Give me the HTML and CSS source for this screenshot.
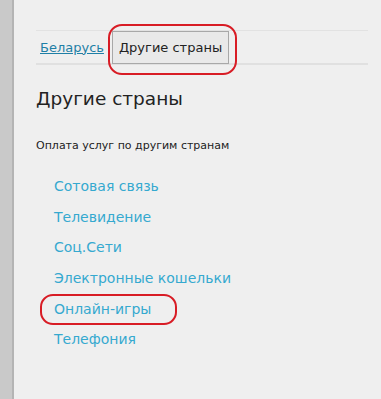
FILE: index.html
```html
<!DOCTYPE html>
<html lang="ru">
<head>
    <meta charset="UTF-8">
    <title>Другие страны</title>
    <link rel="stylesheet" href="styles.css">
</head>
<body>
    <div class="side-strip"></div>
    <div class="page">
        <div class="tabs">
            <a class="tab-link" href="#">Беларусь</a>
            <span class="tab-active">Другие страны</span>
        </div>
        <h1 class="title">Другие страны</h1>
        <p class="lead">Оплата услуг по другим странам</p>
        <ul class="services">
            <li><a href="#">Сотовая связь</a></li>
            <li><a href="#">Телевидение</a></li>
            <li><a href="#">Соц.Сети</a></li>
            <li><a href="#">Электронные кошельки</a></li>
            <li><a class="marked" href="#">Онлайн-игры</a></li>
            <li><a href="#">Телефония</a></li>
        </ul>
    </div>
</body>
</html>
```

FILE: styles.css
```css
body {
    display: flex;
    margin: 0;
    height: 399px;
    font-family: "DejaVu Sans", Verdana, sans-serif;
    background-color: #efefef;
    color: #222;
    overflow: hidden;
}
.side-strip {
    width: 12px;
    background-color: #c9c9c9;
    border-right: 2px solid #b4b4b4;
}
.page {
    flex: 1;
    padding: 30px 13px 0 22px;
}
.tabs {
    display: flex;
    align-items: center;
    gap: 8px;
    height: 32px;
    padding-left: 4px;
    border-top: 1px solid #e2e2e2;
    border-bottom: 2px solid #e0e0e0;
}
.tab-link {
    color: #1f7fa6;
    font-size: 13px;
}
.tab-active {
    position: relative;
    padding: 8px 6px;
    font-size: 13px;
    background-color: #e9e9e9;
    border: 1px solid #a8a8a8;
}
/* красная обводка */
.tab-active::after {
    content: "";
    position: absolute;
    left: -5px;
    right: -9px;
    top: -8px;
    bottom: -12px;
    border: 2px solid #d81c25;
    border-radius: 14px;
}
.title {
    margin: 23px 0 0;
    font-size: 18.5px;
    font-weight: normal;
}
.lead {
    margin: 30px 0 0;
    font-size: 11px;
}
.services {
    list-style: none;
    margin: 26px 0 0;
    padding: 0 0 0 18px;
}
.services li {
    height: 30.7px;
    font-size: 14px;
}
.services a {
    color: #35a9cf;
    text-decoration: none;
}
.marked {
    position: relative;
}
.marked::after {
    content: "";
    position: absolute;
    left: -14px;
    right: -26px;
    top: -7px;
    bottom: -8px;
    border: 2px solid #d81c25;
    border-radius: 13px;
}
```
